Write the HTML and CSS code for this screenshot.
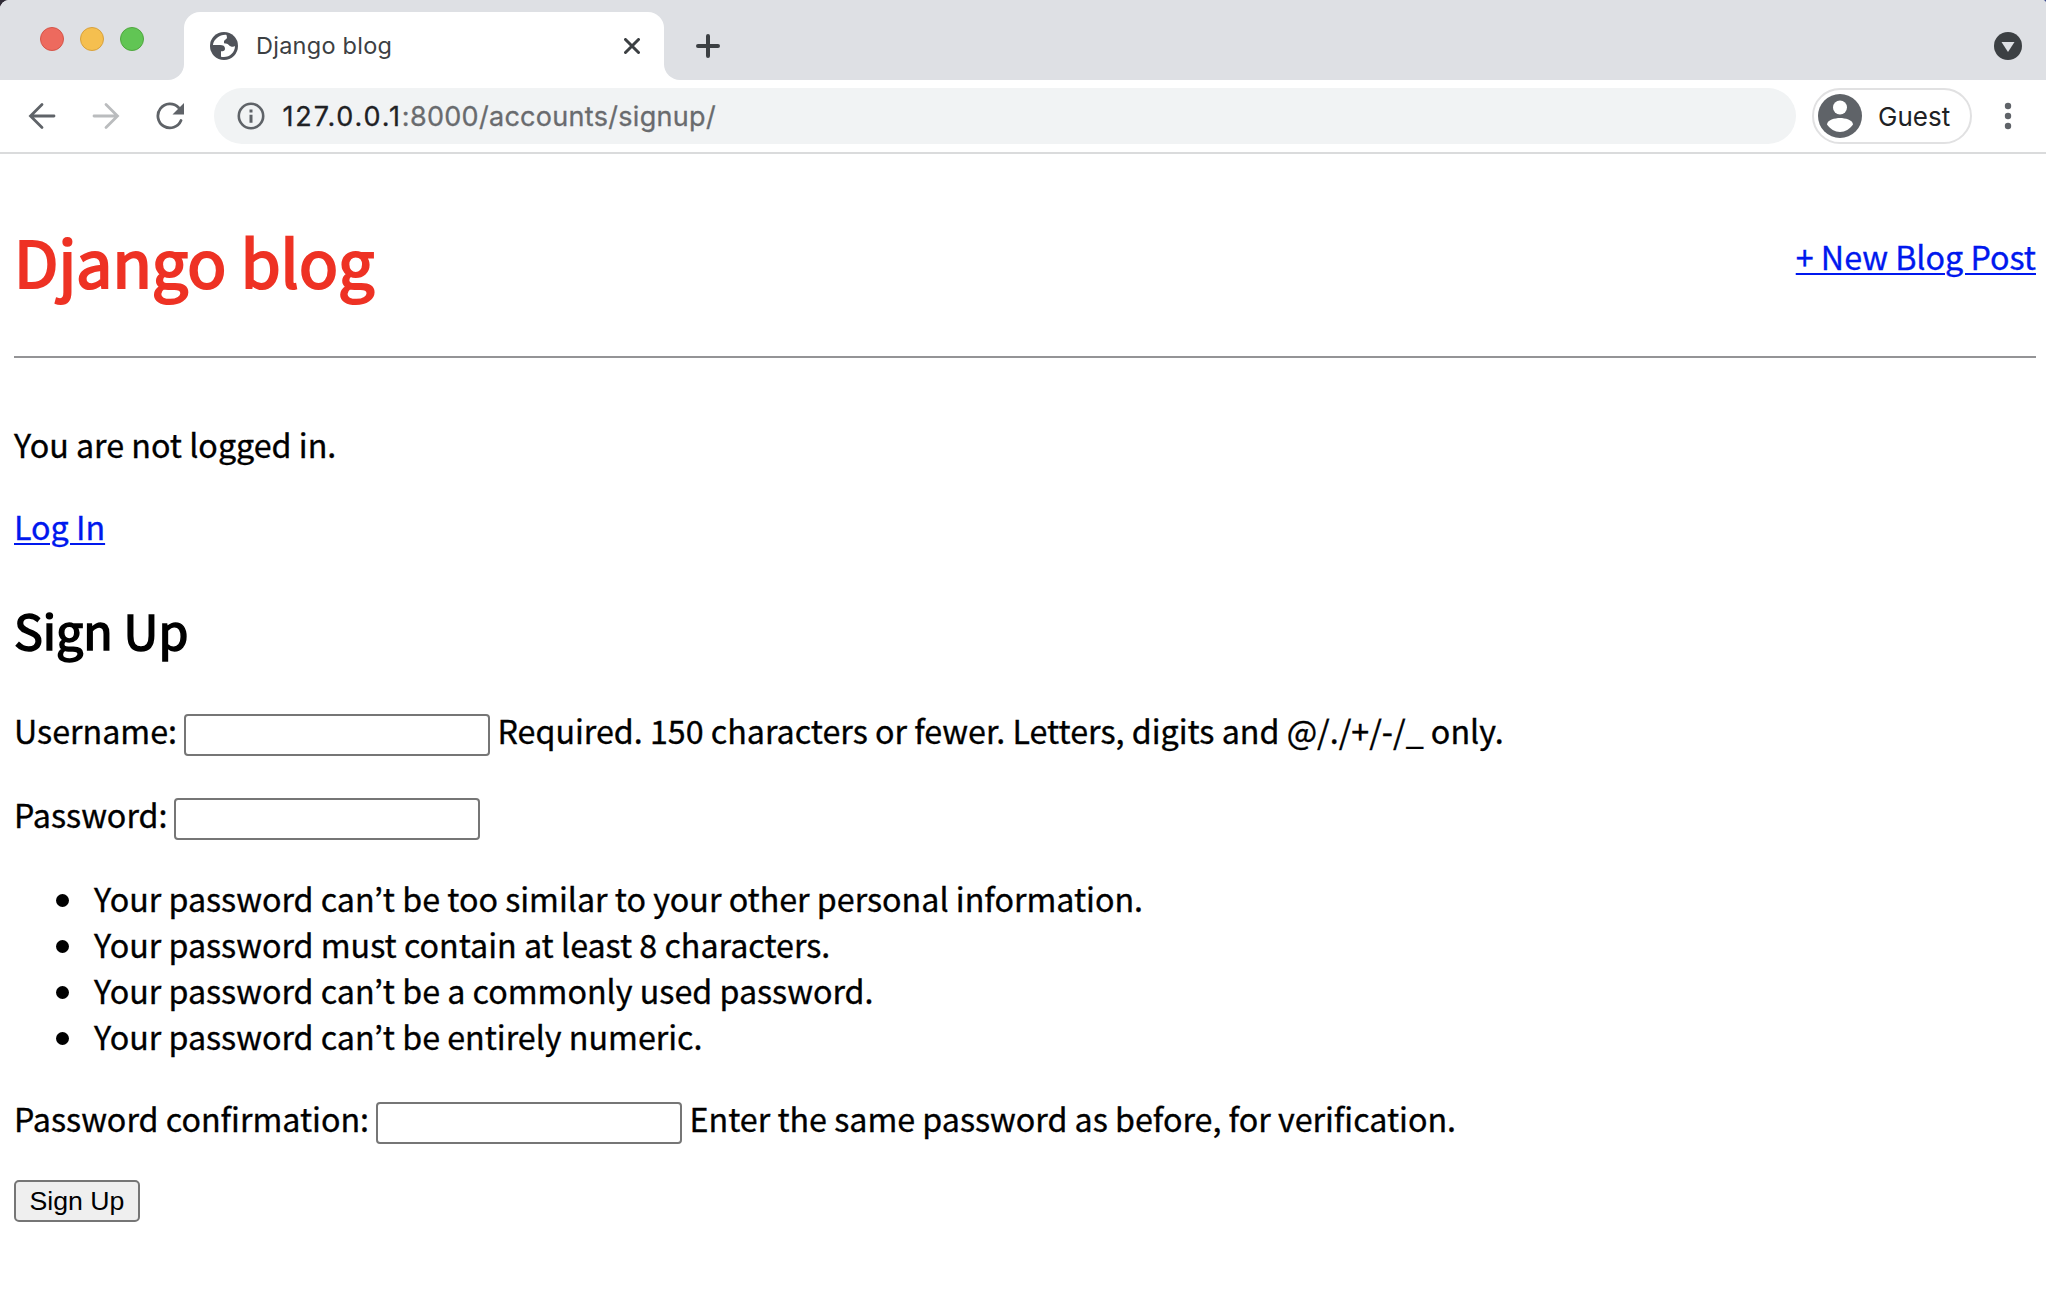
FILE: index.html
```html
<!DOCTYPE html>
<html lang="en">
<head>
<meta charset="utf-8">
<title>Django blog</title>
<link rel="stylesheet" href="styles.css">
</head>
<body>
<div class="window">
  <header class="tab-strip">
    <div class="strip-left">
      <span class="light light-close"></span>
      <span class="light light-minimize"></span>
      <span class="light light-zoom"></span>
    </div>
    <div class="tab-slot">
      <div class="tab">
        <svg class="favicon" viewBox="0 0 28 28" width="28" height="28">
          <circle cx="14" cy="14" r="14" fill="#50535a"/>
          <path fill="#fff" d="M16.500 2.900C10 2.300 4 6.800 2.900 13h7.100c3 0 5 1 5 3.700 0 1.800-1 2.300-2.500 2.500H11v5.500c7.500 1.700 14-3.700 14-10.700-1 1-3 1-4.500.2-1.500-.5-2-2-3.500-2.500l-3-.5V9c1-1.500 3-2 3-3.500z"/>
        </svg>
        <span class="tab-title">Django blog</span>
        <svg class="tab-close" viewBox="0 0 16 16" width="16" height="16"><path d="M1.500 1.500l13 13M14.500 1.500l-13 13"/></svg>
      </div>
    </div>
    <div class="strip-right">
      <svg class="new-tab" viewBox="0 0 24 24" width="24" height="24"><path d="M12 2v20M2 12h20"/></svg>
      <svg class="tab-search" viewBox="0 0 28 28" width="28" height="28"><circle cx="14" cy="14" r="14" fill="#3c4043"/><path d="M7.500 10h13L14 20z" fill="#dee0e4"/></svg>
    </div>
  </header>
  <nav class="toolbar">
    <svg class="nav-icon back" viewBox="0 0 28 28" width="28" height="28"><path d="M26 14H3M14 2.500L2.500 14 14 25.500"/></svg>
    <svg class="nav-icon forward" viewBox="0 0 28 28" width="28" height="28"><path d="M2 14h23M14 2.500L25.500 14 14 25.500"/></svg>
    <svg class="nav-icon reload" viewBox="0 0 28 28" width="28" height="28"><path d="M25 18.500A12 12 0 1 1 22.500 5.500"/><path class="solid" d="M28 1v11.500H16.500z"/></svg>
    <div class="omnibox">
      <svg class="info" viewBox="0 0 28 28" width="28" height="28"><circle cx="14" cy="14" r="12.200" fill="none" stroke="#5f6368" stroke-width="2.600"/><path fill="#5f6368" d="M12.500 7.500h3v3h-3zM12.500 12.800h3v8h-3z"/></svg>
      <span class="url"><span class="url-host">127.0.0.1</span><span class="url-path">:8000/accounts/signup/</span></span>
    </div>
    <div class="profile">
      <svg viewBox="0 0 44 44" width="44" height="44"><circle cx="22" cy="22" r="22" fill="#5f6368"/><circle cx="22" cy="13.500" r="7" fill="#fff"/><path fill="#fff" d="M9 30.500c0-4.500 8-6.500 13-6.500s13 2 13 6.500c-3 4.500-8 7.500-13 7.500s-10-3-13-7.500z"/></svg>
      <span class="profile-name">Guest</span>
    </div>
    <svg class="menu" viewBox="0 0 8 28" width="8" height="28"><circle cx="4" cy="4" r="3.200"/><circle cx="4" cy="14" r="3.200"/><circle cx="4" cy="24" r="3.200"/></svg>
  </nav>
  <main class="page">
    <div class="masthead">
      <h1 class="site-title">Django blog</h1>
      <a class="link new-post" href="#">+ New Blog Post</a>
    </div>
    <p class="status">You are not logged in.</p>
    <p class="login"><a class="link" href="#">Log In</a></p>
    <h2 class="form-title">Sign Up</h2>
    <form>
      <p class="field"><label for="username">Username:</label><input id="username" type="text"><span class="help">Required. 150 characters or fewer. Letters, digits and @/./+/-/_ only.</span></p>
      <p class="field"><label for="password">Password:</label><input id="password" type="password"></p>
      <ul class="rules">
        <li>Your password can’t be too similar to your other personal information.</li>
        <li>Your password must contain at least 8 characters.</li>
        <li>Your password can’t be a commonly used password.</li>
        <li>Your password can’t be entirely numeric.</li>
      </ul>
      <p class="field"><label for="confirm">Password confirmation:</label><input id="confirm" type="password"><span class="help">Enter the same password as before, for verification.</span></p>
      <button class="submit" type="button">Sign Up</button>
    </form>
  </main>
</div>
</body>
</html>
```

FILE: styles.css
```css
* { box-sizing: border-box; }

body {
  margin: 0;
  background: linear-gradient(90deg, #2f2b36 50%, #3b4a8c 50%);
  font-family: "Noto Sans CJK JP", "Noto Sans", sans-serif;
  font-size: 32.23px;
  line-height: 46px;
  color: #000;
}

.window {
  height: 1302px;
  overflow: hidden;
  border-radius: 9px 4px 0 0;
  background: #fff;
}

.tab-strip { display: flex; height: 80px; }

.strip-left {
  display: flex;
  gap: 16px;
  width: 184px;
  padding: 27px 0 0 40px;
  background: #dee0e4;
  border-bottom-right-radius: 16px;
}

.light { width: 24px; height: 24px; border-radius: 50%; border: 1px solid; }
.light-close { background: #ed6a5e; border-color: #d55549; }
.light-minimize { background: #f5bf4f; border-color: #d8a13d; }
.light-zoom { background: #61c554; border-color: #50a73f; }

.tab-slot { width: 480px; padding-top: 12px; background: #dee0e4; }

.tab {
  display: flex;
  align-items: center;
  height: 68px;
  padding: 0 24px 0 26px;
  background: #fff;
  border-radius: 16px 16px 0 0;
}

.tab-title {
  margin-left: 18px;
  font-family: Inter, sans-serif;
  font-size: 23.5px;
  line-height: 32px;
  letter-spacing: 0.25px;
  color: #3c4043;
}

.tab-close { margin-left: auto; }
.tab-close path, .new-tab path {
  fill: none;
  stroke: #3c4043;
  stroke-width: 3;
  stroke-linecap: round;
}
.new-tab path { stroke-width: 4; }

.strip-right {
  display: flex;
  flex: 1;
  align-items: center;
  justify-content: space-between;
  padding: 12px 24px 0 32px;
  background: #dee0e4;
  border-bottom-left-radius: 16px;
}

.toolbar {
  display: flex;
  align-items: center;
  height: 74px;
  padding: 0 34px 0 28px;
  border-bottom: 2px solid #dadbdc;
}

.nav-icon { fill: none; stroke: #5f6368; stroke-width: 2.8; stroke-linecap: round; }
.nav-icon .solid { fill: #5f6368; stroke: none; }
.forward { margin-left: 36px; stroke: #babcbe; }
.reload { margin-left: 36px; }

.omnibox {
  display: flex;
  align-items: center;
  flex: 1;
  height: 56px;
  margin-left: 30px;
  padding-left: 22.5px;
  border-radius: 28px;
  background: #f1f3f4;
}

.url {
  margin-left: 18px;
  padding-top: 1px;
  font-family: Inter, sans-serif;
  font-size: 27px;
  white-space: nowrap;
  -webkit-text-stroke: 0.3px currentColor;
}
.url-host { color: #202124; letter-spacing: 1.85px; }
.url-path { color: #696b6e; letter-spacing: 0.3px; }

.profile {
  display: flex;
  align-items: center;
  width: 160px;
  height: 56px;
  margin-left: 16px;
  padding-left: 4px;
  border: 2px solid #e1e1e2;
  border-radius: 28px;
}

.profile-name {
  margin-left: 16px;
  padding-top: 2px;
  font-family: Inter, sans-serif;
  font-size: 26px;
  color: #202124;
}

.menu { margin-left: 32px; fill: #5f6368; }

.page { padding: 60px 10px 0 14px; -webkit-text-stroke: 0.35px currentColor; }

.masthead {
  display: flex;
  justify-content: space-between;
  align-items: flex-start;
  height: 144px;
  border-bottom: 2px solid #949496;
}

.site-title {
  margin: 0;
  font-size: 64.5px;
  font-weight: 400;
  line-height: 92px;
  color: #ee3224;
  -webkit-text-stroke: 2.2px #ee3224;
}

.link { color: #0018ee; text-underline-offset: 3px; text-decoration-thickness: 2px; }
.new-post { margin-top: 19px; }

.status { margin: 63px 0 36px; }
.login { margin: 0; }

.form-title {
  margin: 50px 0 48px;
  font-size: 48.3px;
  font-weight: 400;
  line-height: 60px;
  -webkit-text-stroke: 1.6px #000;
}

.field { display: flex; height: 46px; margin: 0 0 38px; }

.field input {
  width: 306px;
  height: 42px;
  margin: 7px 7.5px 0 7px;
  border: 2px solid #767676;
  border-radius: 4px;
  background: #fff;
}

.rules { margin: 0 0 36px; padding-left: 41.5px; list-style: none; }
.rules li { display: flex; }
.rules li::before {
  content: "";
  width: 13px;
  height: 13px;
  margin: 18.5px 25.5px 0 0;
  border-radius: 50%;
  background: #000;
}

.submit {
  display: block;
  width: 126px;
  height: 42px;
  margin-top: 39px;
  padding: 0;
  border: 2px solid #767676;
  border-radius: 5px;
  background: #efefef;
  color: #000;
  font-family: "Liberation Sans", Arial, sans-serif;
  font-size: 26.7px;
  line-height: 36px;
  -webkit-text-stroke: 0;
}
```
